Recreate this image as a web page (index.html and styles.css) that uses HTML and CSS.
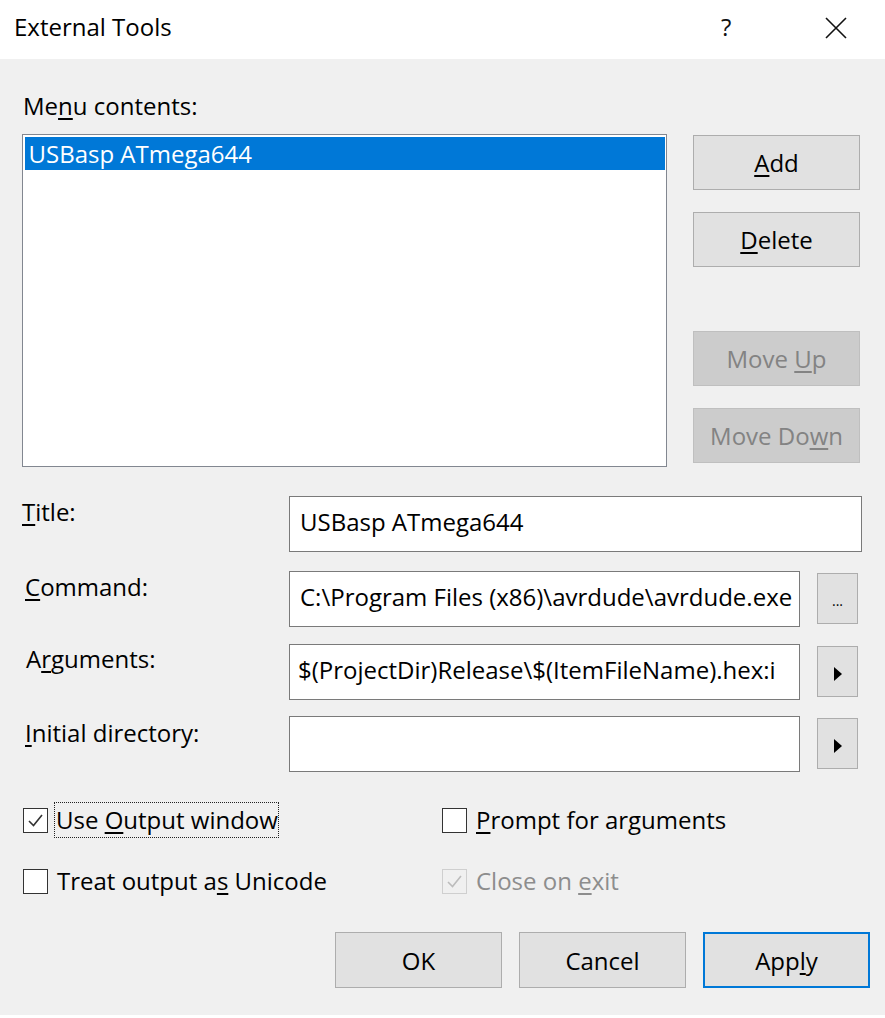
FILE: index.html
```html
<!DOCTYPE html>
<html>
<head>
<meta charset="utf-8">
<link rel="stylesheet" href="styles.css">
</head>
<body>
<div class="dialog">
  <div class="titlebar">
    <span class="title">External Tools</span>
    <span class="help">?</span>
    <span class="close">
      <svg width="22" height="22" viewBox="0 0 22 22"><path d="M1 1 L21 21 M21 1 L1 21" stroke="#111" stroke-width="1.6" fill="none"/></svg>
    </span>
  </div>
  <div class="content">
    <div class="menu-label">Me<u>n</u>u contents:</div>
    <div class="top">
      <div class="listbox">
        <div class="item selected">USBasp ATmega644</div>
      </div>
      <div class="side">
        <button class="btn"><u>A</u>dd</button>
        <button class="btn gap1"><u>D</u>elete</button>
        <button class="btn disabled gap2">Move <u>U</u>p</button>
        <button class="btn disabled gap1">Move Do<u>w</u>n</button>
      </div>
    </div>

    <div class="form">
      <div class="row r-title">
        <div class="lbl l-title"><u>T</u>itle:</div>
        <div class="field wide">USBasp ATmega644</div>
      </div>
      <div class="row r-cmd">
        <div class="lbl l-cmd"><u>C</u>ommand:</div>
        <div class="field">C:\Program Files (x86)\avrdude\avrdude.exe</div>
        <button class="mini dots">...</button>
      </div>
      <div class="row r-args">
        <div class="lbl l-args">A<u>r</u>guments:</div>
        <div class="field args">$(ProjectDir)Release\$(ItemFileName).hex:i</div>
        <button class="mini"><svg width="10" height="16" viewBox="0 0 10 16"><path d="M1 1 L9 8 L1 15 Z" fill="#000"/></svg></button>
      </div>
      <div class="row r-dir">
        <div class="lbl l-dir"><u>I</u>nitial directory:</div>
        <div class="field"></div>
        <button class="mini"><svg width="10" height="16" viewBox="0 0 10 16"><path d="M1 1 L9 8 L1 15 Z" fill="#000"/></svg></button>
      </div>
    </div>

    <div class="checks">
      <div class="check-row">
        <label class="chk c-left">
          <span class="box"><svg width="21" height="21" viewBox="0 0 21 21"><path d="M4 11 L8.5 15.5 L17 5" stroke="#333" stroke-width="1.6" fill="none"/></svg></span>
          <span class="focus">Use <u>O</u>utput window</span>
        </label>
        <label class="chk">
          <span class="box"></span>
          <span class="txt"><u>P</u>rompt for arguments</span>
        </label>
      </div>
      <div class="check-row row2">
        <label class="chk c-left">
          <span class="box"></span>
          <span class="txt">Treat output a<u>s</u> Unicode</span>
        </label>
        <label class="chk dis">
          <span class="box"><svg width="21" height="21" viewBox="0 0 21 21"><path d="M4 11 L8.5 15.5 L17 5" stroke="#bcbcbc" stroke-width="1.6" fill="none"/></svg></span>
          <span class="txt">Close on <u>e</u>xit</span>
        </label>
      </div>
    </div>

    <div class="footer">
      <button class="btn fbtn">OK</button>
      <button class="btn fbtn">Cancel</button>
      <button class="btn fbtn default">App<u>l</u>y</button>
    </div>
  </div>
</div>
</body>
</html>
```

FILE: styles.css
```css
* { box-sizing: border-box; }
html, body { margin: 0; padding: 0; background: #ffffff; }
body {
  width: 885px;
  height: 1018px;
  overflow: hidden;
  font-family: "Open Sans", "Noto Sans", "Liberation Sans", sans-serif;
  font-size: 24px;
  color: #000;
}
u { text-decoration-thickness: 1.5px; text-underline-offset: 3px; }

.dialog { width: 885px; height: 1015px; background: #f0f0f0; display: flex; flex-direction: column; }

.titlebar {
  height: 59px;
  background: #fff;
  display: flex;
  align-items: center;
  padding-left: 14px;
}
.title { font-size: 24px; flex: 1; position: relative; top: -3px; }
.help { width: 24px; margin-right: 80px; font-size: 24px; color: #111; position: relative; top: -3px; }
.close { width: 22px; height: 22px; margin-right: 38px; display: flex; position: relative; top: -2px; }

.content { padding: 0 0 0 22px; }

.menu-label { margin-top: 31px; height: 32px; line-height: 32px; padding-left: 1px; }

.top { display: flex; margin-top: 12px; }
.listbox {
  width: 645px;
  height: 333px;
  background: #fff;
  border: 1.5px solid #828790;
  padding: 1.5px;
}
.item { height: 33px; line-height: 33px; padding-left: 4px; }
.item.selected { background: #0078d7; color: #fff; }

.side { display: flex; flex-direction: column; margin-left: 26px; padding-top: 1px; }
.btn {
  font-family: inherit;
  font-size: 24px;
  width: 167px;
  height: 55px;
  background: #e1e1e1;
  border: 1.5px solid #adadad;
  color: #000;
  padding: 0;
}
.btn.gap1 { margin-top: 22px; }
.btn.gap2 { margin-top: 64px; }
.btn.disabled { background: #cccccc; border-color: #bfbfbf; color: #838383; }

.form { margin-top: 29px; display: flex; flex-direction: column; }
.row { display: flex; align-items: flex-start; height: 55px; }
.r-cmd { margin-top: 20px; }
.r-args { margin-top: 18px; }
.r-dir { margin-top: 17px; }
.lbl { width: 267px; flex: none; line-height: 32px; }
.l-title { padding-left: 0; margin-top: 0; }
.l-cmd { padding-left: 3px; margin-top: 0; }
.l-args { padding-left: 4px; margin-top: -1px; }
.l-dir { padding-left: 3px; margin-top: 1px; }
.field {
  width: 511px;
  height: 56px;
  background: #fff;
  border: 1.5px solid #7a7a7a;
  line-height: 50px;
  padding-left: 10px;
  white-space: nowrap;
  overflow: hidden;
}
.field.wide { width: 573px; }
.field.args { padding-left: 8px; }
.mini {
  width: 41px;
  height: 51px;
  margin-left: 17px;
  margin-top: 2px;
  background: #e1e1e1;
  border: 1.5px solid #adadad;
  padding: 0;
  display: flex;
  align-items: center;
  justify-content: center;
  font-family: inherit;
}
.mini svg { margin-top: 4px; }
.mini.dots { font-size: 14px; align-items: center; padding-top: 4px; color: #000; }

.checks { margin-top: 31px; }
.check-row { display: flex; align-items: center; height: 36px; }
.check-row.row2 { margin-top: 25px; }
.chk { display: flex; align-items: center; }
.c-left { width: 420px; padding-left: 1px; }
.box {
  width: 25px;
  height: 25px;
  border: 1.5px solid #333;
  background: #fff;
  display: flex;
  align-items: center;
  justify-content: center;
  flex: none;
}
.box svg { display: block; }
.txt { margin-left: 9px; line-height: 32px; }
.focus {
  margin-left: 7px;
  padding: 1px 0 1px 1px;
  outline: 1.5px dotted #222;
  outline-offset: 0;
  line-height: 32px;
}
.chk.dis .box { border-color: #cfcfcf; background: #f0f0f0; }
.chk.dis .txt { color: #8d8d8d; }

.footer { display: flex; justify-content: flex-end; gap: 17px; margin-top: 33px; padding-right: 15px; }
.fbtn { width: 167px; height: 56px; }
.fbtn.default { border: 2.5px solid #0078d7; }
```
